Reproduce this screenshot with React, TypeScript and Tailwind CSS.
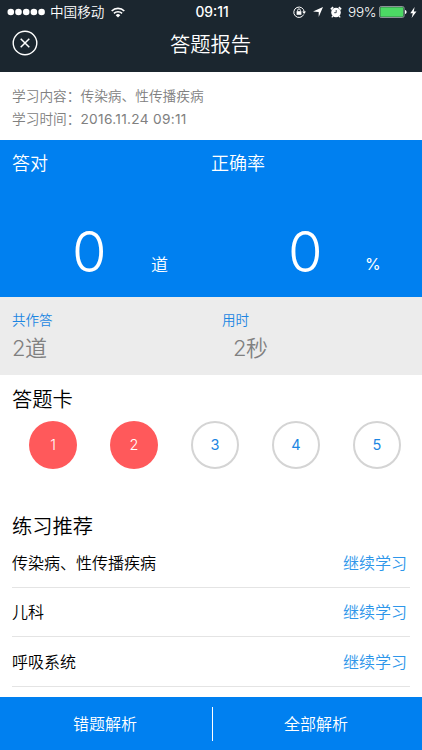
const circles = [
  {label: '1', wrong: true},
  {label: '2', wrong: true},
  {label: '3', wrong: false},
  {label: '4', wrong: false},
  {label: '5', wrong: false},
];

const recommendations = ['传染病、性传播疾病', '儿科', '呼吸系统'];

function StatusBar() {
  return (
    <div className="flex h-6 items-center pl-[7px] pr-[5px]">
      <div className="flex flex-1 items-center">
        <svg width="39" height="8" viewBox="0 0 39 8" fill="#fff">
          {[3.8, 11.5, 19.2, 26.9, 34.6].map((cx) => (
            <circle key={cx} cx={cx} cy="4" r="3.3" />
          ))}
        </svg>
        <span className="ml-1 text-[13.6px] leading-6">中国移动</span>
        <svg className="ml-[7px]" width="14" height="11" viewBox="0 0 14 11" fill="none" stroke="#fff">
          <path d="M.7 4A9 9 0 0 1 13.3 4" strokeWidth="1.7" />
          <path d="M2.9 6.4a5.9 5.9 0 0 1 8.2 0" strokeWidth="1.6" />
          <path d="M7 10.6 4.7 8.2a3.3 3.3 0 0 1 4.6 0Z" fill="#fff" stroke="none" />
        </svg>
      </div>
      <span className="text-[13.8px] font-medium leading-6">09:11</span>
      <div className="flex flex-1 items-center justify-end">
        <svg width="13" height="12" viewBox="0 0 13 12" fill="none" stroke="#fff">
          <path d="M10.7 8.5A5.2 5.2 0 1 1 11.2 6" strokeWidth="1" />
          <path d="m9.2 5.6 3.8 0-1.9 2.3Z" fill="#fff" stroke="none" />
          <rect x="3.6" y="5.2" width="4.8" height="3.6" fill="#fff" stroke="none" />
          <path d="M4.6 5.4V4.3a1.4 1.4 0 0 1 2.8 0v1.1" strokeWidth=".9" />
        </svg>
        <svg className="ml-[7px]" width="10" height="10" viewBox="0 0 10 10" fill="#fff">
          <path d="M10 0 5.7 10V4.9L0 4.5Z" />
        </svg>
        <svg className="ml-[7px]" width="12" height="12" viewBox="0 0 12 12" fill="none">
          <circle cx="6" cy="6.5" r="4.8" fill="#fff" />
          <path d="M.9 3.4 3.1 1.2M8.9 1.2l2.2 2.2" stroke="#fff" strokeWidth="1.7" />
          <path d="m2.8 10-1 1.4M9.2 10l1 1.4" stroke="#fff" strokeWidth="1.2" />
          <path d="M6.2 4v2.7H4.2" stroke="#1b252e" strokeWidth=".8" />
        </svg>
        <span className="ml-[6px] text-[13.6px] leading-6 tracking-[-0.4px]">99%</span>
        <svg className="ml-[3px]" width="28" height="12" viewBox="0 0 28 12">
          <rect x=".5" y=".5" width="24.6" height="11" rx="1.6" fill="none" stroke="#a9b3b2" strokeWidth=".8" />
          <rect x="1.3" y="1.3" width="23" height="9.4" rx=".8" fill="#4cd964" />
          <path d="M26 4v4c1-.3 1.6-1.1 1.6-2S27 4.3 26 4Z" fill="#fff" />
        </svg>
        <svg className="ml-[3px]" width="7" height="11" viewBox="0 0 7 11" fill="#fff">
          <path d="M4.6 0 .3 6.2h2.5L1.6 11 6.5 4.5H3.8Z" />
        </svg>
      </div>
    </div>
  );
}

function Header() {
  return (
    <header className="h-[72px] bg-[#1b262f] text-white">
      <StatusBar />
      <div className="flex h-10 items-center pl-3">
        <svg className="mb-[2px]" width="26" height="26" viewBox="0 0 26 26" fill="none" stroke="#fff">
          <circle cx="13" cy="13" r="11.8" strokeWidth="1.4" />
          <path d="m8.7 8.7 8.6 8.6m0-8.6-8.6 8.6" strokeWidth="1.5" />
        </svg>
        <h1 className="flex-1 pr-[39px] pt-[2px] text-center text-[20.3px] leading-10">答题报告</h1>
      </div>
    </header>
  );
}

function Summary() {
  return (
    <>
      <section className="flex h-[157px] bg-[#0080f0] text-white">
        <div className="w-[211px] pl-3 pt-3">
          <h2 className="text-[18px] leading-6">答对</h2>
          <div className="mt-[45px] flex items-baseline">
            <span className="ml-[60px] w-[79px] text-[56px] leading-[62px]">0</span>
            <span className="relative -top-px text-[17px]">道</span>
          </div>
        </div>
        <div className="flex-1 pt-3">
          <h2 className="text-[18px] leading-6">正确率</h2>
          <div className="mt-[45px] flex items-baseline">
            <span className="ml-[77px] w-[77px] text-[56px] leading-[62px]">0</span>
            <span className="relative -top-[2px] text-[16px] font-normal">%</span>
          </div>
        </div>
      </section>
      <section className="flex h-[78px] bg-[#ececec] pl-3 pt-[13px]">
        <div className="w-[210px]">
          <p className="text-[13.5px] leading-5 text-[#1c86e2]">共作答</p>
          <p className="text-[22px] leading-9 tracking-[-0.5px] text-[#808080]">2道</p>
        </div>
        <div>
          <p className="text-[13.5px] leading-5 text-[#1c86e2]">用时</p>
          <p className="pl-[11px] text-[22px] leading-9 tracking-[-0.5px] text-[#808080]">2秒</p>
        </div>
      </section>
    </>
  );
}

export default function App() {
  return (
    <div className="flex h-[750px] w-[422px] flex-col overflow-hidden bg-white font-['Inter','Noto_Sans_CJK_SC',sans-serif] font-[350] text-black">
      <Header />
      <section className="h-[68px] pl-3 pt-3 text-[13.7px] leading-6 text-[#808080]">
        <p>学习内容：传染病、性传播疾病</p>
        <p className="-mt-px">
          学习时间：<span className="font-normal tracking-[0.3px]">2016.11.24 09:11</span>
        </p>
      </section>
      <Summary />
      <section className="h-[136px] pt-[10px]">
        <h2 className="pl-3 text-[20.3px] leading-[30px]">答题卡</h2>
        <div className="mt-[6px] flex justify-between pl-[29px] pr-[21px]">
          {circles.map(({label, wrong}) => (
            <div
              key={label}
              className={`flex h-12 w-12 items-center justify-center rounded-full text-[14.5px] ${
                wrong ? 'bg-[#ff595b] text-white' : 'border-2 border-[#d4d4d4] font-normal text-[#1c86e2]'
              }`}
            >
              {label}
            </div>
          ))}
        </div>
      </section>
      <section className="flex-1 pl-3 pr-3 pt-px">
        <h2 className="text-[20.3px] leading-[30px]">练习推荐</h2>
        <ul className="-mt-1">
          {recommendations.map((name) => (
            <li
              key={name}
              className="flex h-[49.5px] items-center justify-between border-b border-[#e4e4e4] pr-[3px] pt-px text-[16px]"
            >
              <span>{name}</span>
              <span className="text-[#2d96ea]">继续学习</span>
            </li>
          ))}
        </ul>
      </section>
      <footer className="flex h-[53px] items-center bg-[#0080f0] text-[16px] text-white">
        <span className="w-[212px] pr-[2px] text-center">错题解析</span>
        <span className="h-[34px] w-px bg-white" />
        <span className="flex-1 pr-[3px] text-center">全部解析</span>
      </footer>
    </div>
  );
}
